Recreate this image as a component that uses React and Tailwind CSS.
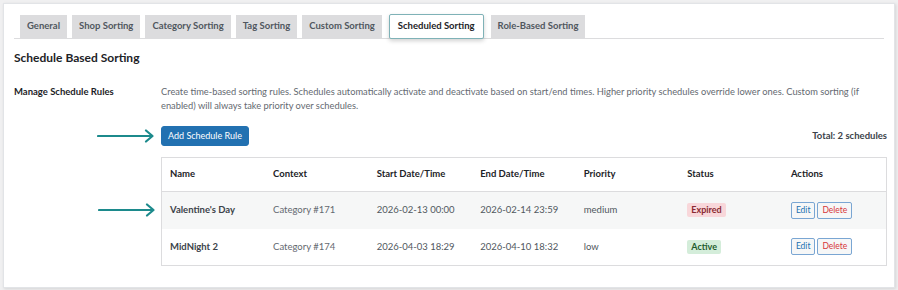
import React from 'react'

const tabs = ['General', 'Shop Sorting', 'Category Sorting', 'Tag Sorting', 'Custom Sorting', 'Scheduled Sorting', 'Role-Based Sorting']

const rows = [
  { name: "Valentine's Day", context: 'Category #171', start: '2026-02-13 00:00', end: '2026-02-14 23:59', priority: 'medium', status: 'Expired' },
  { name: 'MidNight 2', context: 'Category #174', start: '2026-04-03 18:29', end: '2026-04-10 18:32', priority: 'low', status: 'Active' },
]

function Arrow() {
  return (
    <svg width="58" height="14" viewBox="0 0 58 14" className="block">
      <path d="M1 7 H55 M49 1.5 L55.5 7 L49 12.5" fill="none" stroke="#1c8a8c" strokeWidth="2.2" strokeLinecap="round" strokeLinejoin="round" />
    </svg>
  )
}

export default function App() {
  return (
    <div className="w-[898px] h-[290px] bg-[#f0f0f1] overflow-hidden" style={{ fontFamily: 'Lato, "Noto Sans", sans-serif' }}>
      <div className="mx-[3px] mt-[3px] h-[285px] bg-white border border-[#e2e4e7] shadow-[1px_1px_3px_rgba(0,0,0,0.12)] px-[10px] pt-[11px]">
        {/* tabs */}
        <div className="flex items-end gap-[5px] pl-[6px] border-b border-[#dcdcde] h-[24px]">
          {tabs.map((t) =>
            t === 'Scheduled Sorting' ? (
              <div key={t} className="h-[25px] -mb-px px-[8px] flex items-center bg-white border border-[#7fb2b7] rounded-[2px] shadow-[0_2px_4px_rgba(0,0,0,0.18)] text-[9.5px] font-bold text-[#1d2327] mx-[2px]">
                {t}
              </div>
            ) : (
              <div key={t} className="h-[23px] px-[7px] flex items-center bg-[#dcdcde] text-[9.5px] font-bold text-[#50575e]">
                {t}
              </div>
            )
          )}
        </div>

        <div className="text-[12px] font-bold text-[#1d2327] mt-[11px] leading-[16px]">Schedule Based Sorting</div>

        <div className="flex mt-[19px]">
          <div className="w-[147px] shrink-0 text-[9.5px] font-bold text-[#1d2327] leading-[14px]">Manage Schedule Rules</div>
          <div className="flex-1 pr-[5px]">
            <p className="text-[9.3px] text-[#646970] leading-[14px]">
              Create time-based sorting rules. Schedules automatically activate and deactivate based on start/end times. Higher priority schedules override lower ones. Custom sorting (if enabled) will always take priority over schedules.
            </p>

            <div className="flex items-center justify-between mt-[13px] relative">
              <div className="absolute left-[-64px] top-[3px]"><Arrow /></div>
              <button className="h-[20px] px-[6px] bg-[#2271b1] text-white text-[9px] rounded-[3px] border border-[#2271b1]">Add Schedule Rule</button>
              <span className="text-[9.5px] font-bold text-[#3c434a]">Total: 2 schedules</span>
            </div>

            <table className="w-[726px] table-fixed border border-[#dcdcde] mt-[11px] text-[9.5px] border-collapse">
              <thead>
                <tr className="h-[34px] text-left">
                  {['Name', 'Context', 'Start Date/Time', 'End Date/Time', 'Priority', 'Status', 'Actions'].map((h) => (
                    <th key={h} className="font-bold text-[#1d2327] px-[8px] border-b border-[#dcdcde]">{h}</th>
                  ))}
                </tr>
              </thead>
              <tbody>
                {rows.map((r, i) => (
                  <tr key={r.name} className={i === 0 ? 'h-[37px] bg-[#f6f7f7]' : 'h-[37px] bg-white'}>
                    <td className="px-[8px] font-bold text-[#3c434a] relative">
                      {i === 0 && <div className="absolute left-[-64px] top-[11px]"><Arrow /></div>}
                      {r.name}
                    </td>
                    <td className="px-[8px] text-[#646970]">{r.context}</td>
                    <td className="px-[8px] text-[#50575e]">{r.start}</td>
                    <td className="px-[8px] text-[#50575e]">{r.end}</td>
                    <td className="px-[8px] text-[#50575e]">{r.priority}</td>
                    <td className="px-[8px]">
                      {r.status === 'Expired' ? (
                        <span className="inline-block px-[4px] leading-[14px] rounded-[2px] bg-[#f8d7da] text-[#8a2a33] text-[9px] font-bold">Expired</span>
                      ) : (
                        <span className="inline-block px-[4px] leading-[14px] rounded-[2px] bg-[#d4edda] text-[#1e5b2c] text-[9px] font-bold">Active</span>
                      )}
                    </td>
                    <td className="px-[8px]">
                      <div className="flex gap-[2px]">
                        <button className="h-[17px] px-[4px] text-[8.5px] text-[#2271b1] bg-[#f6f7f7] border border-[#7aa6d3] rounded-[2px]">Edit</button>
                        <button className="h-[17px] px-[4px] text-[8.5px] text-[#d63638] bg-[#f6f7f7] border border-[#7aa6d3] rounded-[2px]">Delete</button>
                      </div>
                    </td>
                  </tr>
                ))}
              </tbody>
            </table>
          </div>
        </div>
      </div>
    </div>
  )
}
